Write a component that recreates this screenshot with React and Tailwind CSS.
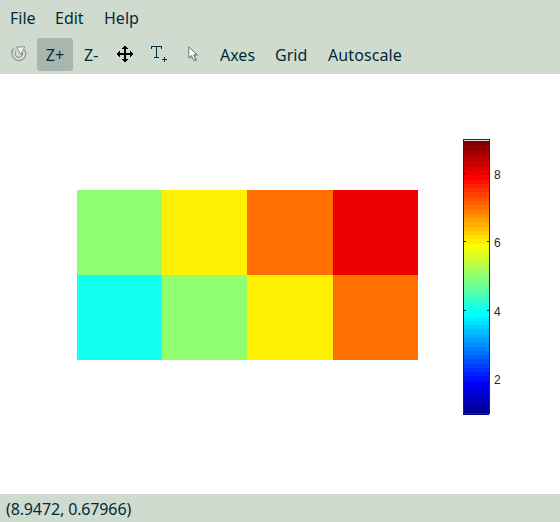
const clamp = (v) => Math.max(0, Math.min(1, v));

// Jet colour map with 64 levels, dark blue first.
const jet = Array.from({ length: 64 }, (_, k) => {
  const i = k + 1;
  const r = clamp(Math.min((i - 24) / 16, (72 - i) / 16));
  const g = clamp(Math.min((i - 8) / 16, (56 - i) / 16));
  const b = clamp(Math.min((i + 8) / 16, (40 - i) / 16));
  return `rgb(${[r, g, b].map((c) => Math.round(c * 255)).join(",")})`;
});

const ticks = [
  { label: "8", y: 35 },
  { label: "6", y: 103 },
  { label: "4", y: 172 },
  { label: "2", y: 240 },
];

function ResetIcon() {
  return (
    <svg width="18" height="17" viewBox="0 0 18 17" fill="none">
      <path d="M4.6 3.6A5.4 5.4 0 1 0 13.2 4.4" stroke="#b4bab4" strokeWidth="4.2" transform="translate(.6 .7)" />
      <path d="M4.6 3.6A5.4 5.4 0 1 0 13.2 4.4" stroke="#8e8e8e" strokeWidth="4" />
      <path d="M4.9 3.9A5.3 5.3 0 1 0 13.2 4.6" stroke="#e0e0e0" strokeWidth="2.1" />
      <path d="M6.6 1L14.8 .8L10.8 8.6Z" fill="#f0f0f0" stroke="#8e8e8e" strokeWidth="1" />
    </svg>
  );
}

function MoveIcon() {
  return (
    <svg width="16" height="16" viewBox="0 0 16 16" fill="#000" shapeRendering="crispEdges">
      <path d="M7 0h2v1h1v1h1v1H9v4h4V5h1v1h1v1h1v2h-1v1h-1v1h-1V9H9v4h2v1h-1v1H9v1H7v-1H6v-1H5v-1h2V9H3v2H2v-1H1V9H0V7h1V6h1V5h1v2h4V3H5V2h1V1h1z" />
    </svg>
  );
}

function TextIcon() {
  return (
    <svg width="16" height="16" viewBox="0 0 16 16" fill="#00303b" shapeRendering="crispEdges">
      <path d="M0 0h11v3h-1V1H6v10h2v1H3v-1h2V1H1v2H0z" />
      <path d="M13 11h1v2h2v1h-2v2h-1v-2h-2v-1h2z" />
    </svg>
  );
}

function PointerIcon() {
  return (
    <svg width="12" height="16" viewBox="0 0 12 16">
      <path d="M1.2 1.2v11l2.7-2.4 2.2 4.8 2.4-1.1-2.2-4.5h3.7z" fill="#7d837d" opacity=".7" transform="translate(.8 .8)" />
      <path d="M.8 .9v11l2.6-2.4 2.2 4.9 2.1-1-2.2-4.6h3.4z" fill="#fff" stroke="#666" strokeWidth=".9" />
    </svg>
  );
}

function Heatmap() {
  return (
    <div className="mt-[116px] ml-[77px] grid h-[170px] w-[341px] shrink-0 grid-cols-[85px_85px_86px_85px] grid-rows-[85px_85px]">
      <div className="bg-[#8fff6f]" />
      <div className="bg-[#ffef00]" />
      <div className="bg-[#ff7000]" />
      <div className="bg-[#ef0000]" />
      <div className="bg-[#10ffef]" />
      <div className="bg-[#8fff6f]" />
      <div className="bg-[#ffef00]" />
      <div className="bg-[#ff7000]" />
    </div>
  );
}

function Colorbar() {
  const step = 274 / 64;
  return (
    <svg className="mt-[65px] ml-[45px] shrink-0" width="50" height="280" shapeRendering="crispEdges">
      <rect x="1" y="1" width="25" height="1" fill="#dedede" />
      {jet.map((color, i) => {
        const top = Math.round(276 - (i + 1) * step);
        const bottom = Math.round(276 - i * step);
        return <rect key={i} x="0" y={top} width="26" height={bottom - top} fill={color} />;
      })}
      <rect x="0.5" y="0.5" width="26" height="274" fill="none" stroke="#262626" />
      {ticks.map(({ label, y }) => (
        <g key={label}>
          <path d={`M1 ${y - 0.5}h2M24 ${y - 0.5}h2`} stroke="#262626" />
          <text x="31" y={y + 5} fontSize="12" fill="#262626" className="font-['Liberation_Sans',sans-serif]">
            {label}
          </text>
        </g>
      ))}
    </svg>
  );
}

export default function App() {
  return (
    <div className="flex h-[522px] w-[560px] flex-col overflow-hidden bg-white font-['Noto_Sans',sans-serif] text-[16px] text-[#002b36]">
      <header className="h-[74px] shrink-0 bg-[#d0dbd0]">
        <nav className="flex h-9 items-center pl-[10px] leading-9">
          <span className="w-[45px]">File</span>
          <span className="w-[49px]">Edit</span>
          <span>Help</span>
        </nav>
        <div className="flex h-[38px] items-start pt-[2px] leading-[35px]">
          <div className="mt-2 ml-[10px] w-[27px]"><ResetIcon /></div>
          <div className="h-[33px] w-9 rounded-[3px] bg-[#a7b7b0] text-center">Z+</div>
          <div className="ml-[11px] w-[33px]">Z-</div>
          <div className="mt-2 w-[34px]"><MoveIcon /></div>
          <div className="mt-2 w-[37px]"><TextIcon /></div>
          <div className="mt-2 w-8"><PointerIcon /></div>
          <div className="w-[55px]">Axes</div>
          <div className="w-[53px]">Grid</div>
          <div className="tracking-[0.1px]">Autoscale</div>
        </div>
      </header>
      <main className="flex h-[420px] shrink-0 items-start">
        <Heatmap />
        <Colorbar />
      </main>
      <footer className="h-7 shrink-0 bg-[#d0dbd0] pl-[6px] leading-[30px] tracking-[-0.13px]">(8.9472, 0.67966)</footer>
    </div>
  );
}
